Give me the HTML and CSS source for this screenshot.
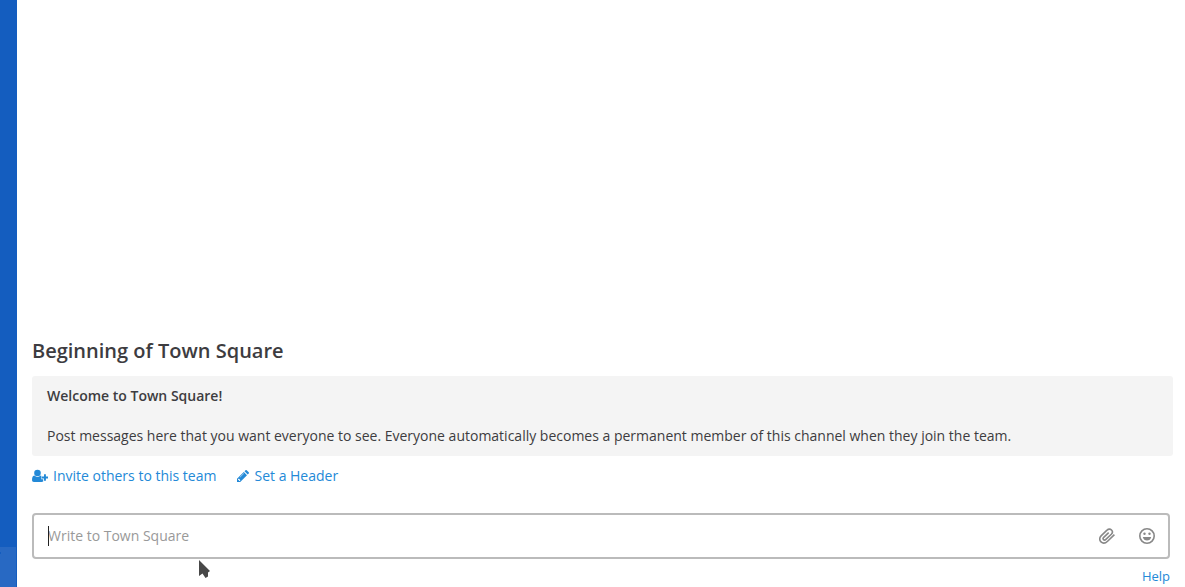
FILE: index.html
```html
<!DOCTYPE html>
<html lang="en">
<head>
<meta charset="utf-8">
<title>Town Square</title>
<link rel="stylesheet" href="styles.css">
</head>
<body>
<div class="app">
  <aside class="sidebar"><div class="sidebar-footer"><span class="sidebar-mark"></span></div></aside>
  <main class="channel">
    <section class="intro">
      <h1 class="intro-title">Beginning of Town Square</h1>
      <div class="intro-content">
        <p class="intro-welcome">Welcome to Town Square!</p>
        <p class="intro-text">Post messages here that you want everyone to see. Everyone automatically becomes a permanent member of this channel when they join the team.</p>
      </div>
      <div class="intro-links">
        <a class="intro-link" href="#invite">
          <svg class="icon-invite" viewBox="0 0 16 14" aria-hidden="true"><circle cx="5.5" cy="4" r="3.3"/><path d="M2.3 6.6Q5.5 9.3 8.7 6.6L9.3 6.8V10.2H11.2V12.6Q10.8 13 9.5 13H1.8Q0 13 0 11.2Q0 7 2.3 6.6Z"/><path d="M12 5.2h1.9v2.3H16v1.9h-2.1v2.3H12V9.4H9.7V7.5H12Z"/></svg>
          <span>Invite others to this team</span>
        </a>
        <a class="intro-link" href="#header">
          <svg class="icon-pencil" viewBox="0 0 12 12" aria-hidden="true"><path fill-rule="evenodd" d="M0 12V8.8L6.8 2L10 5.2L3.2 12ZM1 9.4V10.1H1.9V11H2.6L3.4 10.2L1.8 8.6ZM6.7 3.2L2.7 7.2L3 7.5L7 3.5Z"/><path d="M7.5 1.3L8.5 .3Q9.1-.3 9.7.3L11.7 2.3Q12.3 2.9 11.7 3.5L10.7 4.5Z"/></svg>
          <span>Set a Header</span>
        </a>
      </div>
    </section>
    <form class="composer">
      <div class="composer-field">
        <input class="composer-input" type="text" placeholder="Write to Town Square" aria-label="Write to Town Square">
        <span class="caret"></span>
        <button class="composer-button" type="button" aria-label="Attach file">
          <svg class="icon-action" viewBox="0 0 16 16" aria-hidden="true"><path d="M15.4 6.6L8.6 13.2C6.5 15.2 3.8 15.6 2 13.9C.2 12.2.3 9.5 2.3 7.6L8 2.2C9.4.8 11.3.8 12.5 2C13.7 3.2 13.6 5 12.3 6.3L6.9 11.4C6.1 12.2 5.1 12.2 4.5 11.6C3.9 11 4 10 4.7 9.3L9.7 4.6"/></svg>
        </button>
        <button class="composer-button" type="button" aria-label="Emoji picker">
          <svg class="icon-action" viewBox="0 0 16 16" aria-hidden="true"><circle cx="8" cy="8" r="7.2"/><circle class="solid" cx="5.5" cy="5.8" r="1.2"/><circle class="solid" cx="10.5" cy="5.8" r="1.2"/><path class="solid" d="M3.8 9H12.2Q11.3 12.5 8 12.5T3.8 9Z"/></svg>
        </button>
        <svg class="pointer" viewBox="0 0 12 20" aria-hidden="true"><path d="M1 1V17L4.5 14.5L7.5 19L10 17.5V13.5L12 12Z"/></svg>
      </div>
      <a class="help-link" href="#help">Help</a>
    </form>
  </main>
</div>
</body>
</html>
```
FILE: styles.css
```css
* { box-sizing: border-box; }
body { margin: 0; background: #fff; color: #3d3c40; font: 14px/20px "Open Sans", sans-serif; }
h1, p { margin: 0; }
a { color: #2389d7; text-decoration: none; }
a:hover { text-decoration: underline; }
.app { display: flex; min-height: 100vh; }
.sidebar { display: flex; flex: 0 0 17px; flex-direction: column; justify-content: flex-end; padding-right: 1px; background: #145dbf; }
.sidebar-footer { height: 40px; padding-top: 5px; background: #2869c3; }
.sidebar-mark { display: block; width: 1px; height: 2px; background: #145dbf; }
.channel { display: flex; flex: 1; min-width: 0; flex-direction: column; justify-content: flex-end; }
.intro { padding: 0 12px 0 15px; }
.intro-title { margin-bottom: 11px; font-size: 20px; font-weight: 600; line-height: 28px; }
.intro-content { padding: 10px 15px; border-radius: 3px; background: #f4f4f4; }
.intro-welcome { margin-bottom: 20px; font-weight: 600; }
.intro-links { display: flex; gap: 21px; padding: 10px 0 27px; }
.intro-link { display: flex; align-items: center; gap: 5px; }
.icon-invite { width: 16px; height: 14px; fill: currentColor; }
.icon-pencil { width: 12px; height: 12px; fill: currentColor; }
.composer { display: flex; flex-direction: column; padding: 0 15px 1px; }
.composer-field { position: relative; display: flex; align-items: center; padding-right: 1px; border: 2px solid #bbb; border-radius: 4px; background: #fff; }
.composer-input { flex: 1; min-width: 0; height: 42px; padding: 0 14px 2px; border: 0; outline: 0; background: transparent; color: inherit; font: inherit; }
.composer-input::placeholder { color: #999; opacity: 1; }
.composer-button { display: flex; align-items: center; justify-content: center; width: 40px; height: 42px; padding: 0; border: 0; background: transparent; color: #888; }
.icon-action { width: 16px; height: 16px; fill: none; stroke: currentColor; stroke-width: 1.6; }
.icon-action .solid { fill: currentColor; stroke: none; }
.caret { position: absolute; top: 11px; left: 14px; width: 1px; height: 20px; background: #222; }
.pointer { position: absolute; top: 44px; left: 164px; width: 12px; height: 20px; fill: #484848; }
.help-link { align-self: flex-end; margin-top: 7px; font-size: 13px; }
```
